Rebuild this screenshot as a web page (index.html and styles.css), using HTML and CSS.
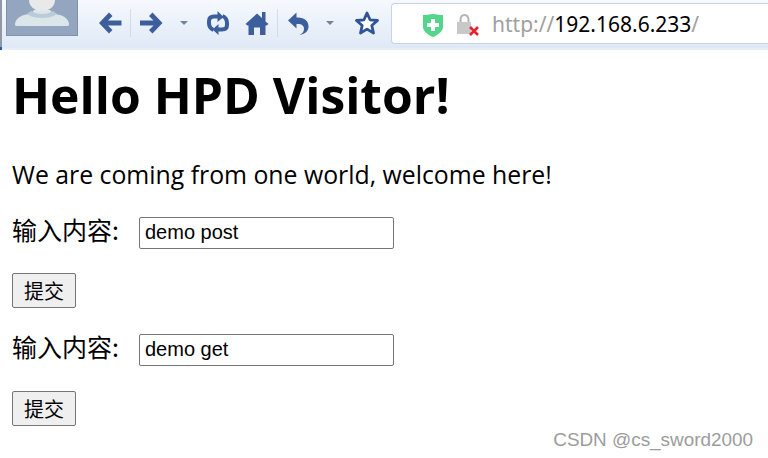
FILE: index.html
```html
<!DOCTYPE html>
<html lang="zh">
<head>
<meta charset="utf-8">
<title>Hello HPD Visitor</title>
<link rel="stylesheet" href="styles.css">
</head>
<body>
<header class="toolbar">
  <div class="avatar">
    <svg width="72" height="36" viewBox="0 0 72 36"><rect width="72" height="36" fill="#7f91ac"/><rect x="1" y="0" width="70" height="35" fill="#94a6bf"/><path d="M9 25c0-5 3-8 9-10 5-1 8-2 10-5h16c2 3 5 4 10 5 6 2 9 5 9 10 0 0 0 1-2 1H11c-2 0-2-1-2-1z" fill="#dbe6ea"/><path d="M23 0h26c0 6-5 11-13 11S23 6 23 0z" fill="#e9e9ea"/><path d="M25 11c3 2 7 3 11 3s8-1 11-3l4 3c-4 3-10 4-15 4s-11-1-15-4z" fill="#b9ccd8"/></svg>
  </div>
  <svg class="icon back" width="24" height="24" viewBox="0 0 24 24"><path d="M1 12L11 1.500 14.500 5 10 9.500h13.500v5H10l4.500 4.500L11 22.500z" fill="#3d5e9c"/></svg>
  <span class="sep"></span>
  <svg class="icon fwd" width="24" height="24" viewBox="0 0 24 24"><path d="M23.500 12L13.500 1.500 10 5l4.500 4.500H1v5h13.500L10 19l3.500 3.500z" fill="#3d5e9c"/></svg>
  <span class="caret first"></span>
  <svg class="icon reload" width="24" height="24" viewBox="0 0 24 24"><path d="M7.500 19C4 17.500 3 15 3 12V10c0-3 2-4.500 5-4.500H13M16.500 5C20 6.500 21 9 21 12v2c0 3-2 4.500-5 4.500H11" fill="none" stroke="#3d5e9c" stroke-width="4"/><path d="M11.500 0l6 6-6 5zM12.500 13l-6 5.500 6 5.500z" fill="#3d5e9c"/></svg>
  <svg class="icon home" width="24" height="24" viewBox="0 0 24 24"><path d="M.5 13L12 2.500l5 4.500V1h3.500v9.500L23.500 13l-2 1.500H20.500V24H15v-7.500H9V24H3.500v-9.500h-1z" fill="#3d5e9c"/></svg>
  <span class="sep second"></span>
  <svg class="icon undo" width="24" height="24" viewBox="0 0 24 24"><path d="M1 9.500L9.500 1.500V6.500h1.500c6.500 0 10.500 3.500 10.500 9 0 4-3 7.500-9 8.500 3-1.500 4.500-3.500 4.500-6 0-3-2-5-6-5H9.500V17.500z" fill="#3d5e9c"/></svg>
  <span class="caret second"></span>
  <svg class="icon star" width="24" height="24" viewBox="0 0 24 24"><path d="M12 2l3 6.800 7.500.7-5.700 5 1.700 7.500-6.500-3.900L5.500 22l1.700-7.500-5.700-5 7.500-.7z" fill="#fff" stroke="#2f5596" stroke-width="2.800" stroke-linejoin="round"/></svg>
  <div class="address">
    <svg class="shield" width="20" height="23" viewBox="0 0 20 23"><path d="M0 1c3 0 7-.500 10-1 3 .5 7 1 10 1v12c0 4-5 8-10 10C5 21 0 17 0 13z" fill="#53d58c"/><path d="M8 5h4v4h4v4h-4v4H8v-4H4V9h4z" fill="#fff"/></svg>
    <svg class="lock" width="22" height="22" viewBox="0 0 22 22"><path d="M3.500 9V6c0-3 1.500-5 4-5s4 2 4 5v3" fill="none" stroke="#b4b4b4" stroke-width="2"/><rect x="0" y="8" width="14" height="12" fill="#c8c8c8"/><path d="M13 13l8 8m0-8l-8 8" stroke="#e8212b" stroke-width="2.600"/></svg>
    <span class="url"><span class="dim">http://</span>192.168.6.233<span class="dim">/</span></span>
  </div>
</header>
<main class="page">
  <h1 class="title">Hello HPD Visitor!</h1>
  <p class="intro">We are coming from one world, welcome here!</p>
  <form class="entry">
    <p class="row wide"><label class="label">输入内容:</label><input class="field" type="text" value="demo post"></p>
    <p class="row tight"><button class="submit" type="button">提交</button></p>
  </form>
  <form class="entry">
    <p class="row wide"><label class="label">输入内容:</label><input class="field" type="text" value="demo get"></p>
    <p class="row"><button class="submit" type="button">提交</button></p>
  </form>
</main>
<div class="mark">CSDN @cs_sword2000</div>
</body>
</html>
```
FILE: styles.css
```css
* { box-sizing: border-box; }
html, body { margin: 0; padding: 0; }
body { width: 768px; height: 458px; overflow: hidden; background: #fff; position: relative; color: #000; font-family: "Open Sans", "Noto Sans CJK SC", sans-serif; }
.toolbar { height: 50px; display: flex; align-items: flex-start; padding-left: 6px; background: linear-gradient(#f6f9fe, #dfe9f6); border-bottom: 2px solid #eaedf1; position: relative; }
.toolbar::before { content: ""; position: absolute; left: 0; top: 0; width: 2px; height: 50px; background: linear-gradient(#8f98a6 94%, #1a62b8 94%); }
.avatar { width: 72px; height: 36px; flex: none; }
.avatar svg { display: block; }
.icon { flex: none; margin-top: 11px; }
.back { margin-left: 20px; }
.sep { width: 1px; height: 28px; margin: 9px 0 0 8px; background: #d2dce9; flex: none; }
.fwd { margin-left: 8px; }
.caret { width: 0; height: 0; margin: 21px 0 0 17px; border-left: 4px solid transparent; border-right: 4px solid transparent; border-top: 4px solid #75839a; flex: none; }
.caret.second { margin-left: 15px; }
.reload { margin-left: 18px; }
.home { margin-left: 15px; }
.undo { margin-left: 9px; }
.star { margin-left: 21px; }
.address { margin: 3px 0 0 12px; flex: 1; height: 41px; display: flex; align-items: center; background: #fff; border: 1px solid #c5d5e7; border-right: 0; border-radius: 4px 0 0 4px; }
.shield { margin: 3px 0 0 31px; }
.lock { margin: 3px 0 0 14px; }
.url { margin-left: 13px; font: 21px "Noto Sans", sans-serif; color: #000; }
.dim { color: #a0a0a0; }
.page { padding: 0 12px; }
.title { margin: 13px 0 0; font-size: 49.800px; line-height: 65px; font-weight: 700; }
.intro { margin: 29px 0 0; font-size: 24.800px; line-height: 34px; }
.entry { margin: 0; }
.row { margin: 25px 0 0; display: flex; align-items: center; min-height: 32px; }
.row.wide { margin-top: 26px; }
.row.tight { margin-top: 24px; }
.label { font: 25px/24px "Noto Sans CJK SC", sans-serif; width: 127px; margin-bottom: 8px; flex: none; }
.field { width: 255px; height: 32px; padding: 0 5px 1px; border: 1px solid #767676; border-radius: 2px; font: 20px "Liberation Sans", sans-serif; color: #000; background: #fff; outline: 0; }
.submit { width: 64px; height: 35px; padding: 0; border: 1px solid #767676; border-radius: 2px; background: #efefef; font: 20px "Noto Sans CJK SC", sans-serif; color: #000; }
.mark { position: absolute; right: 15px; top: 429px; font: 18.900px "Liberation Sans", sans-serif; color: #9c9c9c; }
```
